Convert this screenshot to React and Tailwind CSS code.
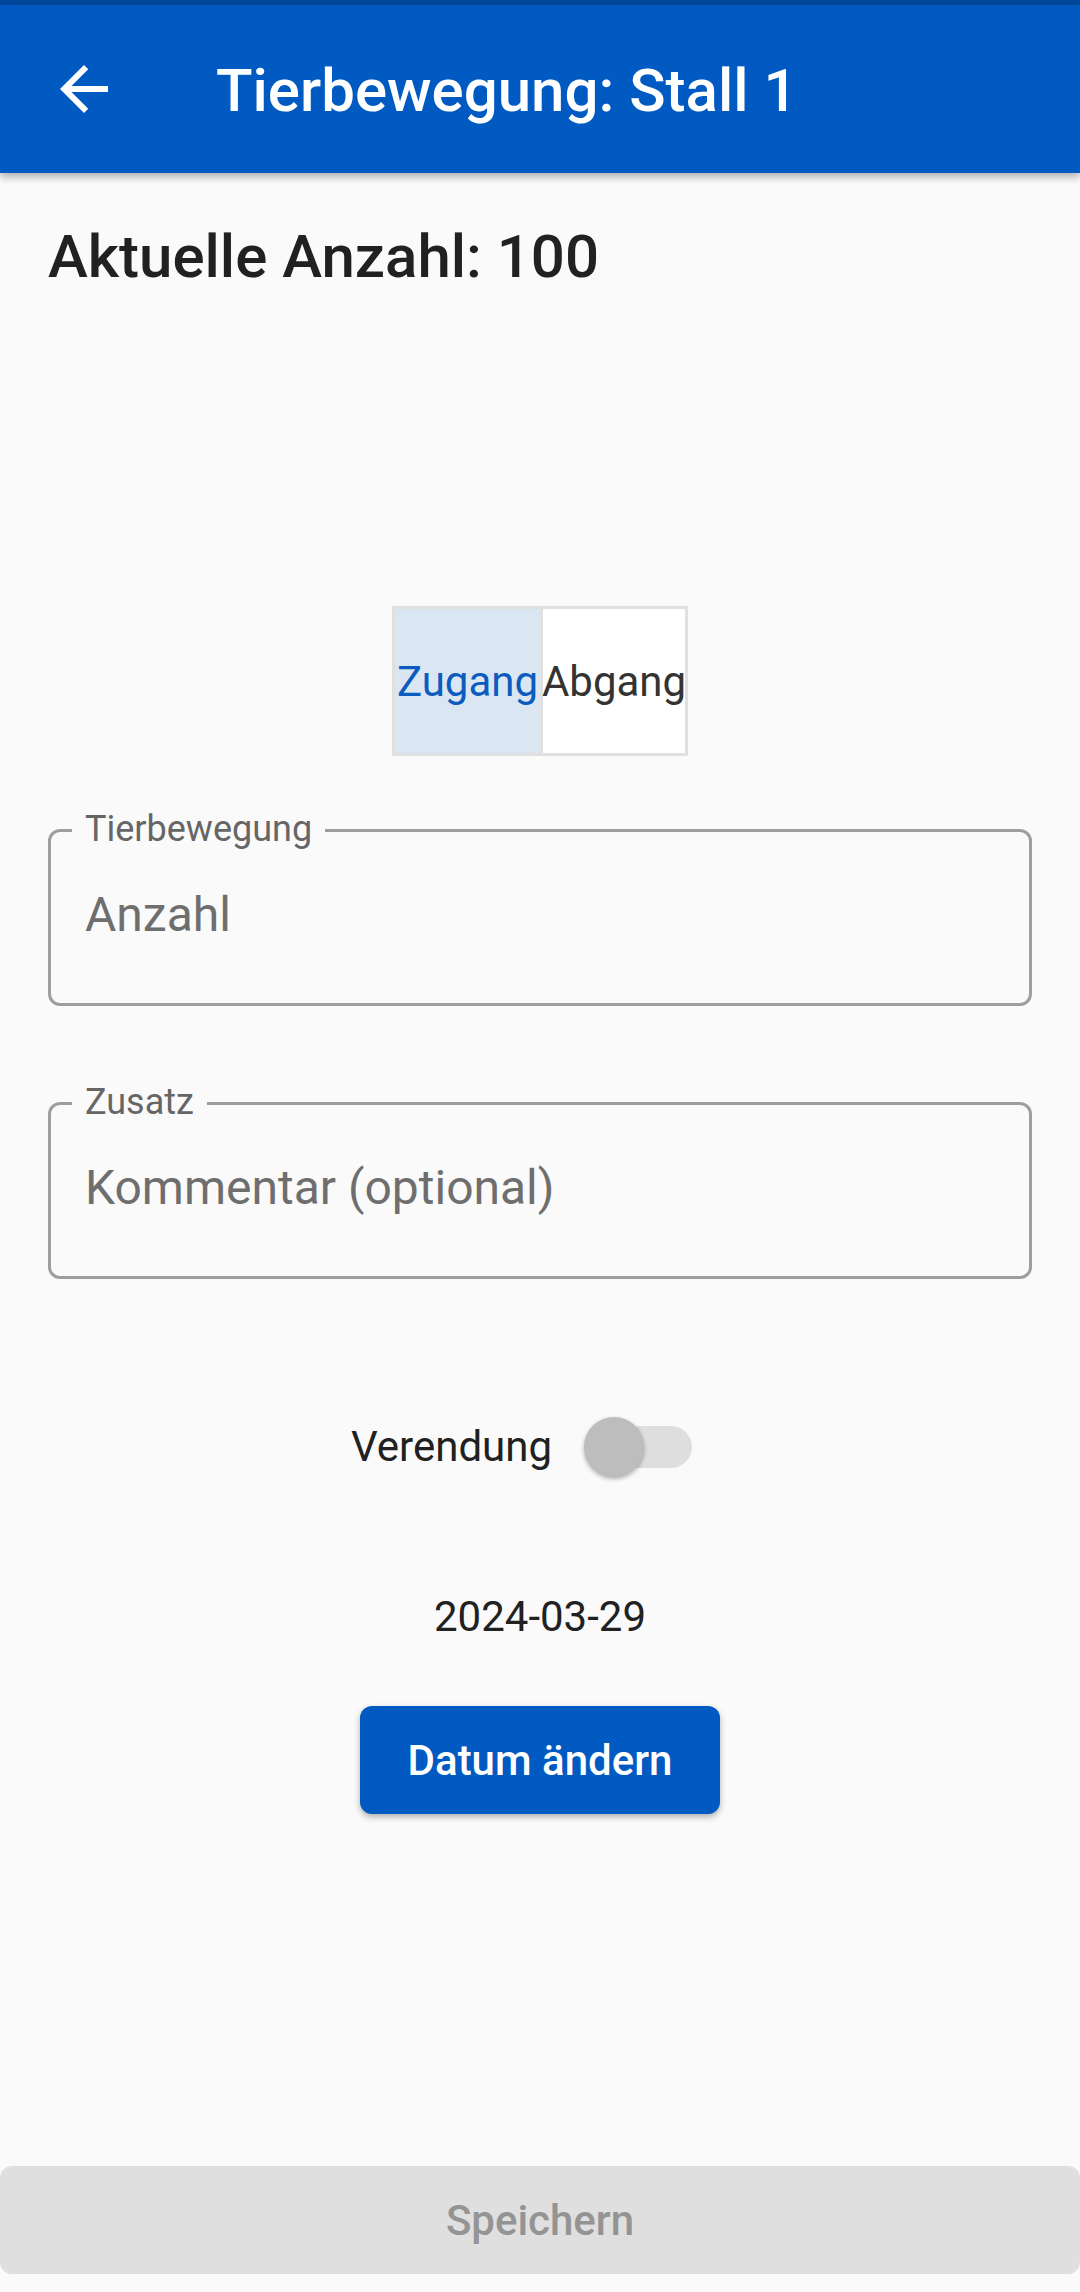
import React from "react";

const font = { fontFamily: "Roboto, 'Noto Sans', sans-serif" };

function Field({ label, hint }) {
  return (
    <div className="relative mx-[48px] border-[3px] border-[#9e9e9e] rounded-[12px] pl-[34px] pt-[55px] pb-[60px]">
      <span className="absolute left-[21px] top-[-21px] px-[13px] bg-[#fafafa] text-[36px] leading-[36px] text-[#666666]">
        {label}
      </span>
      <div className="text-[48px] leading-[56px] text-[#6e6e6e]">{hint}</div>
    </div>
  );
}

export default function App() {
  return (
    <div className="min-h-[2292px] flex flex-col bg-[#fafafa]" style={font}>
      <div className="h-[5px] bg-[#00479c]" />
      <div className="relative z-10 h-[168px] bg-[#005ac1] flex items-center shadow-[0_4px_8px_rgba(0,0,0,0.3)]">
        <div className="ml-[48px] w-[72px] h-[72px] flex items-center justify-center">
          <svg width="72" height="72" viewBox="0 0 24 24" fill="#ffffff">
            <path d="M20 11H7.83l5.59-5.59L12 4l-8 8 8 8 1.41-1.41L7.83 13H20v-2z" />
          </svg>
        </div>
        <div className="ml-[96px] mt-[4px] text-[60px] leading-[70px] font-medium text-white">
          Tierbewegung: Stall 1
        </div>
      </div>

      <div className="pt-[49px] px-[48px] text-[60px] leading-[70px] font-medium text-[#212121]">
        Aktuelle Anzahl: 100
      </div>

      <div className="mt-[314px] flex justify-center">
        <div className="flex border-[3px] border-[#e0e0e0]">
          <div className="w-[145px] h-[144px] bg-[#dbe6f3] flex items-center justify-center text-[42px] text-[#0b5cbe]">
            Zugang
          </div>
          <div className="w-[145px] h-[144px] border-l-[3px] border-[#e0e0e0] bg-white flex items-center justify-center text-[42px] text-[#333333]">
            Abgang
          </div>
        </div>
      </div>

      <div className="mt-[73px]">
        <Field label="Tierbewegung" hint="Anzahl" />
      </div>
      <div className="mt-[96px]">
        <Field label="Zusatz" hint="Kommentar (optional)" />
      </div>

      <div className="mt-[96px] flex justify-center items-center h-[144px]">
        <span className="text-[42px] leading-[48px] text-[#212121]">Verendung</span>
        <div className="relative w-[177px] h-[144px] flex items-center justify-center">
          <div className="w-[102px] h-[42px] rounded-full bg-[#dedede]" />
          <div className="absolute left-[32px] top-[42px] w-[60px] h-[60px] rounded-full bg-[#bdbdbd] shadow-[0_2px_4px_rgba(0,0,0,0.3)]" />
        </div>
      </div>

      <div className="mt-[74px] text-center text-[42px] leading-[48px] text-[#212121]">
        2024-03-29
      </div>

      <div className="mt-[65px] flex justify-center">
        <div className="h-[108px] px-[48px] rounded-[12px] bg-[#005ac1] flex items-center text-[42px] font-medium text-white shadow-[0_3px_6px_rgba(0,0,0,0.3)]">
          Datum ändern
        </div>
      </div>

      <div className="flex-1" />

      <div className="mb-[18px] h-[108px] rounded-[12px] bg-[#dfdfdf] flex items-center justify-center text-[42px] font-medium text-[#949494]">
        Speichern
      </div>
    </div>
  );
}
